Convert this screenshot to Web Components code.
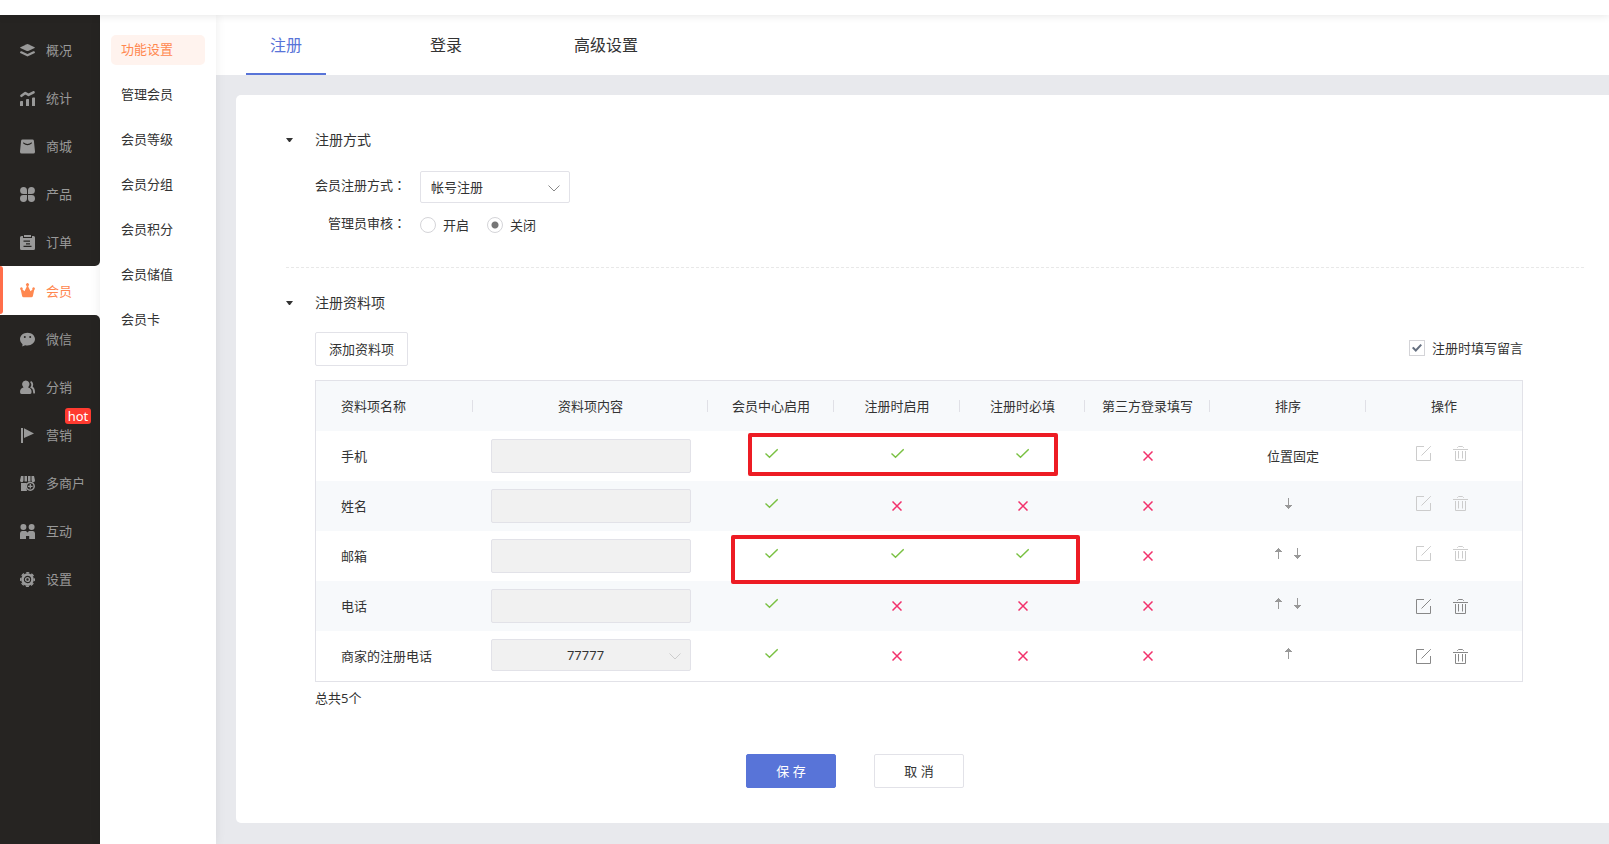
<!DOCTYPE html>
<html lang="zh-CN">
<head>
<meta charset="utf-8">
<title>会员 - 功能设置</title>
<style>
  :root {
    --accent: #5874d8;
    --brand: #ff8850;
    --line: #e2e2e8;
    --text: #333;
    --page: #e8e9ed;
  }
  body {
    margin: 0;
    background: var(--page);
    color: var(--text);
    font: 13px/20px "Noto Sans", "Noto Sans CJK SC", sans-serif;
  }
</style>
</head>
<body>
<admin-app>
  <main-nav slot="nav">
    <nav-group first>
      <nav-item icon="layers">概况</nav-item>
      <nav-item icon="chart">统计</nav-item>
      <nav-item icon="bag">商城</nav-item>
      <nav-item icon="clover">产品</nav-item>
      <nav-item icon="clip">订单</nav-item>
    </nav-group>
    <nav-item icon="crown" active>会员</nav-item>
    <nav-group last>
      <nav-item icon="chat">微信</nav-item>
      <nav-item icon="people">分销</nav-item>
      <nav-item icon="flag" badge="hot">营销</nav-item>
      <nav-item icon="shop">多商户</nav-item>
      <nav-item icon="pair">互动</nav-item>
      <nav-item icon="gear">设置</nav-item>
    </nav-group>
  </main-nav>
  <sub-nav slot="sub">
    <sub-item active>功能设置</sub-item>
    <sub-item>管理会员</sub-item>
    <sub-item>会员等级</sub-item>
    <sub-item>会员分组</sub-item>
    <sub-item>会员积分</sub-item>
    <sub-item>会员储值</sub-item>
    <sub-item>会员卡</sub-item>
  </sub-nav>
  <tab-bar>
    <tab-item active>注册</tab-item>
    <tab-item>登录</tab-item>
    <tab-item>高级设置</tab-item>
  </tab-bar>
  <settings-panel>
    <form-section divided>
      <span slot="title">注册方式</span>
      <register-mode></register-mode>
    </form-section>
    <form-section>
      <span slot="title">注册资料项</span>
      <fields-toolbar></fields-toolbar>
      <fields-table></fields-table>
    </form-section>
    <form-actions></form-actions>
  </settings-panel>
</admin-app>

<script>
const ICONS = {
  layers: ['15 15', '<path fill="currentColor" d="M6.800 1.200q.7-.3 1.400 0l6.400 3q.6.300 0 .700l-6.400 3q-.7.300-1.400 0l-6.400-3q-.6-.400 0-.700z"/><path fill="none" stroke="currentColor" stroke-width="2.200" stroke-linecap="round" stroke-linejoin="round" d="M1.200 9.300 7.500 12.300 13.800 9.300"/>'],
  chart: ['15 15', '<path fill="none" stroke="currentColor" stroke-width="2.600" stroke-linecap="round" stroke-linejoin="round" d="M1.500 4.800 5.300 2 8.500 3.900 13.500 1.300"/><path fill="currentColor" d="M0 15v-4q0-1 1-1h1.500q.5 0 .5.500V15zM6 15V9q0-1 1-1h1.500q.5 0 .5.500V15zM12 15V7.500q0-1 1-1h1.500q.5 0 .5.500v8z"/>'],
  bag: ['15 15', '<path fill="currentColor" fill-rule="evenodd" d="M2.500.5h10q1.200 0 1.400 1.200L15 12.500q.1 2-1.600 2H1.600Q-.1 14.500 0 12.500L1.100 1.700Q1.300.5 2.500.5zM3.400 3.300 3 4.300q4.500 3.800 9 0l-.4-1q-4.100 3.400-8.200 0z"/>'],
  clover: ['15 15', '<path fill="currentColor" d="M3.600 0A3.600 3.600 0 0 1 7 3.600V7H3.600A3.500 3.500 0 0 1 3.600 0zM11.400 0a3.500 3.500 0 0 1 0 7H8V3.600A3.600 3.600 0 0 1 11.400 0zM3.600 8H7v3.400A3.500 3.500 0 1 1 3.600 8zM8 8h3.400A3.500 3.500 0 1 1 8 11.400z"/>'],
  clip: ['15 15', '<path fill="currentColor" fill-rule="evenodd" d="M1.500 1H3v2h9V1h1.500Q15 1 15 2.500v11q0 1.500-1.500 1.500h-12Q0 15 0 13.500v-11Q0 1 1.500 1zM3.500 5.500v1.200h6.500V5.500zm0 5.300V12h8v-1.200zm2.500-2.600v1.200h4V8.200z"/><path fill="currentColor" d="M4 0h7v2H4z"/>'],
  crown: ['15 15', '<path fill="currentColor" d="M6.700 3.800V2.900a1.500 1.500 0 1 1 1.600 0v.9l2.200 4.400 2-1.800a1.300 1.300 0 1 1 1.700.5l-1.300 6q-.3 1.300-1.500 1.300H3.600q-1.200 0-1.500-1.300L.8 6.900a1.300 1.300 0 1 1 1.700-.5l2 1.800z"/>'],
  chat: ['15 15', '<path fill="currentColor" fill-rule="evenodd" d="M7.500.7c4.200 0 7.500 2.800 7.500 6.400s-3.300 6.400-7.500 6.400q-1.200 0-2.400-.3L2.300 14.500l.2-2.300C1 11 0 9.200 0 7.100 0 3.500 3.300.7 7.500.7zM4.800 4a1 1 0 1 0 0 2 1 1 0 0 0 0-2zm5.400 0a1 1 0 1 0 0 2 1 1 0 0 0 0-2z"/>'],
  people: ['15 15', '<path fill="currentColor" d="M5.800.5a3.700 3.900 0 0 1 2.300 7q3.400.7 3.500 4.500 0 2-1.500 2H1.500q-1.500 0-1.500-2 .1-3.800 3.500-4.500a3.700 3.900 0 0 1 2.300-7z"/><path fill="none" stroke="currentColor" stroke-width="1.800" stroke-linecap="round" d="M11.200 2.200q2 2.300.2 5 2.800 1.200 2.700 5.500"/>'],
  flag: ['15 15', '<path fill="currentColor" d="M1 0h2v15H1zM4 .3 14 5.500 4 10z"/>'],
  shop: ['15 15', '<path fill="currentColor" d="M1 0h2.500v4.500a1.700 1.700 0 0 1-3.500 0zM4.500 0H7v5.500H4.500zM8 0h2.500v5.500H8zM11.500 0H14l1 4.500a1.700 1.700 0 0 1-3.500 0zM1 7h6l-1.200 2.500L7 15H1z"/><circle cx="10.300" cy="10.300" r="3.900" fill="none" stroke="currentColor" stroke-width="1.500"/><path stroke="currentColor" stroke-width="1.300" d="M10.300 8v4.600M8 10.300h4.600"/>'],
  pair: ['15 15', '<path fill="currentColor" d="M0 15V9.500Q0 7 2 7h4l1.500 1.500L9 7h4q2 0 2 2.500V15H9.200v-3H6v3z"/><circle cx="3.400" cy="3.100" r="3" fill="currentColor"/><circle cx="11.600" cy="3.100" r="3" fill="currentColor"/>'],
  gear: ['15 15', '<g fill="none" stroke="currentColor"><circle cx="7.500" cy="7.500" r="5" stroke-width="2.600"/><circle cx="7.500" cy="7.500" r="6.800" stroke-width="1.400" stroke-dasharray="3.100 2.240" stroke-dashoffset="1.550"/><circle cx="7.500" cy="7.500" r="1.900" stroke-width="1.400"/></g>'],
  caret: ['8 4', '<path fill="currentColor" d="M0 0h7L4 4H3z"/>'],
  chevron: ['12 7', '<path fill="none" stroke="currentColor" d="M.5.500 6 6 11.500.500"/>'],
  check: ['13 18', '<path fill="none" stroke="#7ac143" stroke-width="1.400" d="M.5 6.500 4.500 10.300 12.700 2.200"/>'],
  cross: ['10 10', '<path fill="none" stroke="#f2316b" stroke-width="1.500" d="M.5.500 9.500 9.500M9.500.500.500 9.500"/>'],
  up: ['7 16', '<path fill="currentColor" d="M3 0h1v1h1v1h1v1h1v1H4v7H3V4H0V3h1V2h1V1h1z"/>'],
  down: ['7 16', '<path fill="currentColor" d="M3 0h1v7h3v1H6v1H5v1H4v1H3v-1H2V9H1V8H0V7h3z"/>'],
  edit: ['15 15', '<path fill="none" stroke="currentColor" d="M8 .5H.5v14h14V7M5.500 9.500 14.800.200"/>'],
  trash: ['15 15', '<path fill="none" stroke="currentColor" d="M4.500 2V1.500L5.500.500h4l1 1V2M0 3.500h15M2.500 5v9.500h10V5M5.500 5v7.500M9.500 5v7.500"/>'],
};
const icon = name => {
  const [size, body] = ICONS[name];
  const [w, h] = size.split(' ');
  return `<svg width="${w}" height="${h}" viewBox="0 0 ${w} ${h}" aria-hidden="true">${body}</svg>`;
};
const RESET = `*{box-sizing:border-box} svg{display:block;flex:none} button,select,input{font:inherit;color:inherit;margin:0}`;
const define = (name, css, html) => customElements.define(name, class extends HTMLElement {
  constructor() {
    super();
    this.attachShadow({ mode: 'open' }).innerHTML =
      `<style>${RESET}${css}</style>` + (typeof html === 'function' ? html(this) : html);
  }
});

define('admin-app', `
  :host{display:flex;flex-direction:column;min-height:100vh}
  header{height:15px;background:#fff;box-shadow:0 0 10px rgba(0,0,0,.12);position:relative;z-index:3}
  .body{flex:1;display:flex}
  main{flex:1;min-width:0;display:flex;flex-direction:column}`,
  `<header></header><div class="body"><slot name="nav"></slot><slot name="sub"></slot><main><slot></slot></main></div>`);

define('main-nav', `
  :host{display:flex;flex:none;width:100px;background:#fff}
  nav{flex:1;display:flex;flex-direction:column}`,
  `<nav aria-label="主菜单"><slot></slot></nav>`);

define('nav-group', `
  :host{display:block;background:#262422}
  :host([first]){padding-top:11px;border-bottom-right-radius:5px}
  :host([last]){flex:1;border-top-right-radius:5px}`,
  `<slot></slot>`);

define('nav-item', `
  :host{display:block;color:#999}
  a{position:relative;display:flex;align-items:center;gap:11px;height:48px;padding-left:20px;color:inherit;text-decoration:none}
  :host([active]){color:var(--brand)}
  :host([active]) a{height:49px}
  :host([active]) a::before{content:"";position:absolute;left:0;top:0;width:3px;height:48px;background:#ff6e4a;border-radius:0 3px 3px 0}
  .badge{position:absolute;left:65px;top:-3px;width:26px;height:16px;border-radius:3px;background:#ff3b30;color:#fff;line-height:16px;text-align:center}`,
  el => `<a href="#">${icon(el.getAttribute('icon'))}<span><slot></slot></span>${el.hasAttribute('badge') ? `<span class="badge">${el.getAttribute('badge')}</span>` : ''}</a>`);

define('sub-nav', `
  :host{display:block;flex:none;width:116px;background:#fff;box-shadow:0 0 10px rgba(0,0,0,.08);position:relative;z-index:1}
  nav{display:flex;flex-direction:column;gap:15px;padding:20px 11px}`,
  `<nav aria-label="子菜单"><slot></slot></nav>`);

define('sub-item', `
  :host{display:block}
  a{display:block;padding:4px 10px 6px;border-radius:5px;color:inherit;text-decoration:none}
  :host([active]) a{background:#fff3ee;color:var(--brand)}`,
  `<a href="#"><slot></slot></a>`);

define('tab-bar', `
  :host{display:block;background:#fff}
  nav{display:flex;gap:80px;padding-left:30px}`,
  `<nav aria-label="设置"><slot></slot></nav>`);

define('tab-item', `
  :host{display:block}
  a{display:block;width:80px;height:60px;line-height:60px;font-size:16px;text-align:center;color:inherit;text-decoration:none}
  :host([active]) a{color:var(--accent);border-bottom:2px solid var(--accent)}`,
  `<a href="#"><slot></slot></a>`);

define('settings-panel', `
  :host{display:block;flex:1;margin:20px 0 21px 20px;padding:35px 0;background:#fff;border-radius:5px 0 0 5px}`,
  `<slot></slot>`);

define('form-section', `
  :host{display:block}
  h2{display:flex;align-items:center;gap:21px;margin:0;padding-left:50px;font-size:14px;line-height:20px;font-weight:400}
  .content{padding-left:79px;padding-right:86px}
  :host([divided]) .content{padding-bottom:32px}
  hr{display:none;margin:0 23px 25px 50px;border:0;height:1px;background:repeating-linear-gradient(90deg,#e8e8e8 0 3px,transparent 3px 5px)}
  :host([divided]) hr{display:block}`,
  `<section><h2>${icon('caret')}<slot name="title"></slot></h2><div class="content"><slot></slot></div><hr></section>`);

define('register-mode', `
  :host{display:flex;flex-direction:column;gap:10px;padding-top:21px}
  .row{display:flex;gap:14px}
  .label{width:91px;text-align:right;white-space:nowrap}
  .label span{font-family:"Noto Sans CJK TC",sans-serif}
  label.label{padding-top:4px}
  .select{position:relative;width:150px}
  select{display:block;width:100%;height:32px;padding:0 30px 0 10px;appearance:none;background:#fff;border:1px solid var(--line);border-radius:2px}
  .select svg{position:absolute;right:10px;top:14px;color:#888;pointer-events:none}
  .radios{display:flex;gap:18px;padding-top:2px}
  .radios label{display:flex;align-items:center;gap:7px}
  input{appearance:none;width:16px;height:16px;border:1px solid #d4d4d8;border-radius:50%;background:#fff}
  input:checked{background:radial-gradient(circle,#777 0 3px,#fff 4px)}`,
  `<div class="row"><label class="label" for="mode">会员注册方式<span lang="zh-TW">：</span></label>
    <div class="select"><select id="mode"><option>帐号注册</option></select>${icon('chevron')}</div></div>
   <div class="row" role="radiogroup" aria-labelledby="audit"><div class="label" id="audit">管理员审核<span lang="zh-TW">：</span></div>
    <div class="radios"><label><input type="radio" name="audit">开启</label><label><input type="radio" name="audit" checked>关闭</label></div></div>`);

define('fields-toolbar', `
  :host{display:flex;justify-content:space-between;align-items:center;padding:19px 0 14px}
  button{height:34px;padding:0 13px;background:#fff;border:1px solid var(--line);border-radius:2px}
  label{display:flex;align-items:center;gap:7px;padding-bottom:3px}
  input{appearance:none;position:relative;width:16px;height:16px;border:1px solid #d4d4d8;background:#fff}
  input:checked::before{content:"";position:absolute;left:2px;top:3px;width:10px;height:9px;background:#667080;clip-path:polygon(0 50%,15% 35%,38% 60%,85% 5%,100% 20%,38% 95%)}`,
  `<button type="button">添加资料项</button><label><input type="checkbox" checked>注册时填写留言</label>`);

const COLUMNS = [['资料项名称', 157], ['资料项内容', 235], ['会员中心启用', 126], ['注册时启用', 126], ['注册时必填', 125], ['第三方登录填写', 125], ['排序', 156], ['操作', 156]];
/* name, value, four switches (1 = on), sort controls, removable */
const ROWS = [
  ['手机', '', '1110', 'fixed', false],
  ['姓名', '', '1000', 'down', false],
  ['邮箱', '', '1110', 'up down', false],
  ['电话', '', '1000', 'up down', true],
  ['商家的注册电话', '77777', '1000', 'up', true],
];
const TITLES = { up: '上移', down: '下移' };
const rowHtml = ([name, value, flags, sort, editable]) => `<tr><td class="name">${name}</td>
  <td><div class="value">${value
    ? `<select disabled aria-label="${name}"><option>${value}</option></select>${icon('chevron')}`
    : `<input type="text" disabled aria-label="${name}">`}</div></td>
  ${[...flags].map(f => `<td><button type="button" aria-label="${f === '1' ? '已启用' : '未启用'}">${icon(f === '1' ? 'check' : 'cross')}</button></td>`).join('')}
  ${sort === 'fixed' ? '<td class="fixed">位置固定</td>'
    : `<td><div class="sort">${sort.split(' ').map(s => `<button type="button" aria-label="${TITLES[s]}">${icon(s)}</button>`).join('')}</div></td>`}
  <td><div class="ops"><button type="button" aria-label="编辑" ${editable ? '' : 'disabled'}>${icon('edit')}</button><button type="button" aria-label="删除" ${editable ? '' : 'disabled'}>${icon('trash')}</button></div></td></tr>`;

define('fields-table', `
  :host{display:block;position:relative}
  .frame{border:1px solid var(--line)}
  table{width:100%;table-layout:fixed;border-collapse:collapse}
  th,td{height:50px;padding:0;font-weight:400;text-align:center;vertical-align:middle}
  th{white-space:nowrap;background:linear-gradient(#e0e0e6,#e0e0e6) no-repeat right 19px/1px 12px}
  th:last-child{background:none}
  thead tr,tbody tr:nth-child(even){background:#f7f9fb}
  .name,th:first-child{text-align:left;padding-left:25px}
  .fixed{padding-left:10px}
  .value{position:relative;width:200px;height:34px;margin:0 auto}
  .value>input,select{display:block;width:100%;height:34px;background:#f1f1f1;border:1px solid var(--line);border-radius:2px;opacity:1}
  .value>select{height:32px;appearance:none;padding:0 10px 0 0;text-align-last:center;color:var(--text)}
  .value svg{position:absolute;right:10px;top:14px;color:#ccc}
  button{display:block;padding:0;border:0;background:none;margin:0 auto}
  .sort,.ops{display:flex;justify-content:center;gap:12px}
  .sort{color:#999}
  .sort button,.ops button{margin:0}
  .ops{gap:22px;padding-right:4px;color:#888}
  .ops button:disabled{color:#ccc;padding-bottom:6px}
  .mark{position:absolute;border:4px solid #ed1c24;border-radius:2px;pointer-events:none}
  .m1{left:433px;top:53px;width:310px;height:43px}
  .m2{left:416px;top:155px;width:349px;height:49px}
  p{margin:6px 0 0}`,
  `<div class="frame"><table><colgroup>${COLUMNS.map(c => `<col style="width:${c[1]}px">`).join('')}</colgroup>
    <thead><tr>${COLUMNS.map(c => `<th scope="col">${c[0]}</th>`).join('')}</tr></thead>
    <tbody>${ROWS.map(rowHtml).join('')}</tbody></table></div>
   <div class="mark m1"></div><div class="mark m2"></div>
   <p>总共5个</p>`);

define('form-actions', `
  :host{display:flex;gap:38px;padding:46px 0 0 510px}
  button{width:90px;height:34px;background:#fff;border:1px solid var(--line);border-radius:2px}
  .primary{background:var(--accent);border-color:var(--accent);color:#fff}`,
  `<button type="submit" class="primary">保 存</button><button type="button">取 消</button>`);
</script>
</body>
</html>
